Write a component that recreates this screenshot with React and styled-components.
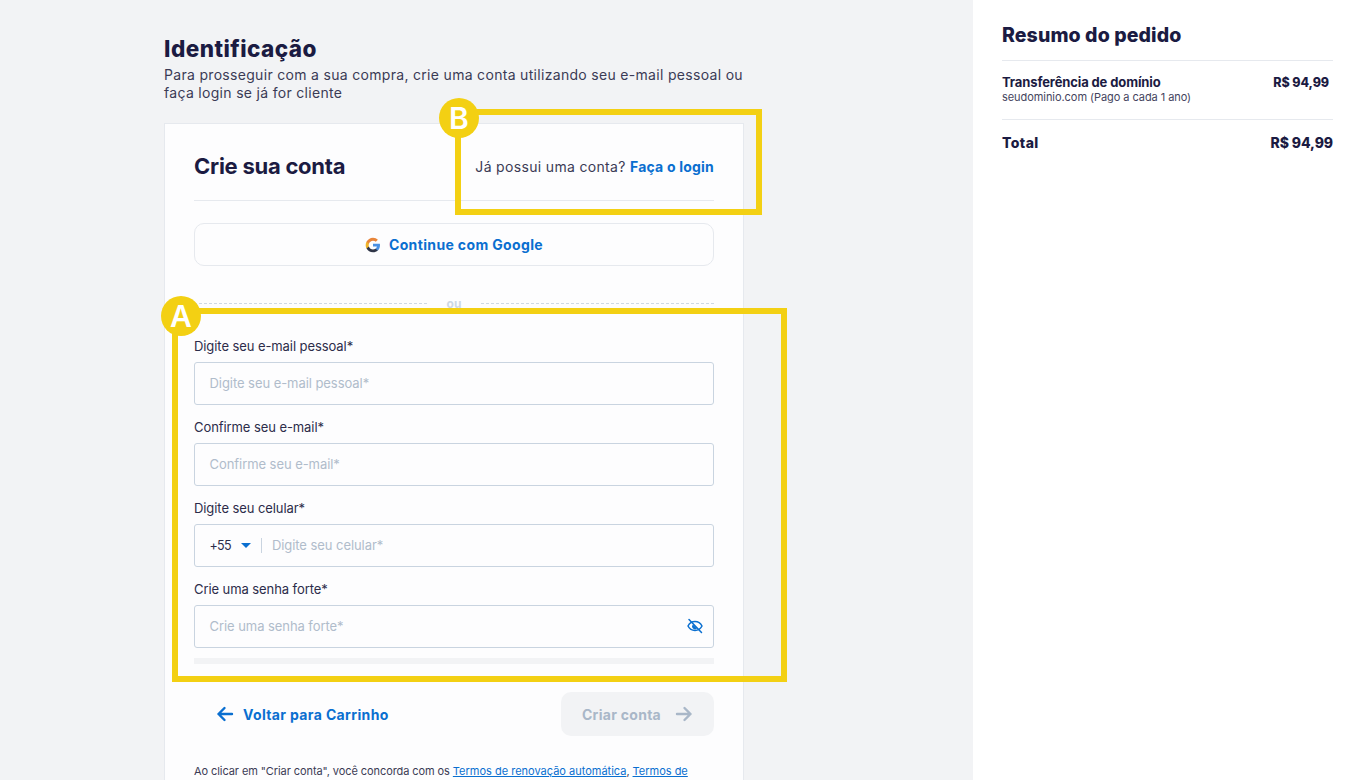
import React from "react";
import styled, { createGlobalStyle } from "styled-components";

const Global = createGlobalStyle`
  html, body { margin: 0; padding: 0; height: 780px; overflow: hidden; background: #f2f3f5; }
  * { box-sizing: border-box; }
  body { font-family: "Inter", "Liberation Sans", sans-serif; color: #1b1b42; }
`;

const Page = styled.div`
  position: relative;
  display: flex;
  width: 1353px;
  height: 780px;
  overflow: hidden;
`;
const Main = styled.main`
  width: 973px;
  flex: none;
  padding: 35px 0 0 164px;
  background: #f2f3f5;
`;
const Title = styled.h1`
  margin: 0 0 4px;
  font-size: 22.5px;
  line-height: 27px;
  font-weight: 800;
  letter-spacing: 0.45px;
  color: #1b1b42;
`;
const Intro = styled.p`
  margin: 0 0 21px;
  width: 600px;
  font-size: 14px;
  line-height: 18px;
  color: #3b3b55;
  letter-spacing: 0.31px;
`;
const Card = styled.section`
  width: 580px;
  height: 700px;
  padding: 0 29px;
  background: #fdfdfe;
  border: 1px solid #e6e9ee;
`;
const CardHead = styled.header`
  display: flex;
  align-items: center;
  justify-content: space-between;
  height: 77px;
  padding-top: 8px;
  border-bottom: 1px solid #e6e9ee;
`;
const CardTitle = styled.h2`
  margin: 0;
  font-size: 22px;
  font-weight: 700;
  letter-spacing: -0.25px;
  color: #1b1b42;
`;
const HeadNote = styled.div`
  font-size: 14px;
  color: #3b3b55;
  letter-spacing: 0.33px;
  a { font-weight: 700; color: #0a6fd0; text-decoration: none; letter-spacing: 0.2px; }
`;
const GoogleButton = styled.button`
  display: flex;
  align-items: center;
  justify-content: center;
  gap: 8px;
  width: 100%;
  height: 43px;
  margin-top: 22px;
  background: #fdfdfe;
  border: 1px solid #e6e9ee;
  border-radius: 10px;
  font: 700 14px "Inter", sans-serif;
  letter-spacing: 0.36px;
  color: #0a6fd0;
`;
const Or = styled.div`
  display: flex;
  align-items: center;
  gap: 20px;
  height: 14px;
  margin: 30px 0 0;
  font-size: 12px;
  font-weight: 700;
  color: #cdd8e4;
  &::before, &::after { content: ""; flex: 1; border-top: 1px dashed #cdd8e4; }
`;
const Fields = styled.div`
  display: flex;
  flex-direction: column;
  gap: 14px;
  margin-top: 28px;
`;
const Field = styled.div`
  display: flex;
  flex-direction: column;
  gap: 7px;
`;
const Label = styled.label`
  font-size: 13px;
  line-height: 17px;
  height: 17px;
  letter-spacing: -0.08px;
  color: #2c2c4a;
`;
const InputBox = styled.div`
  display: flex;
  align-items: center;
  height: 43px;
  padding: 0 10px 1px 14.5px;
  background: #fdfdfe;
  border: 1px solid #c9d4e0;
  border-radius: 3px;
  font-size: 13px;
  letter-spacing: -0.06px;
  color: #b0bccb;
`;
const Placeholder = styled.span`
  flex: 1;
`;
const Prefix = styled.span`
  display: flex;
  align-items: center;
  gap: 10px;
  height: 15px;
  padding-right: 10px;
  margin-right: 10px;
  border-right: 1px solid #c9d4e0;
  font-size: 12.5px;
  letter-spacing: -0.7px;
  color: #2c2c4a;
`;
const Caret = styled.i`
  width: 0;
  height: 0;
  border-left: 5px solid transparent;
  border-right: 5px solid transparent;
  border-top: 5px solid #0a6fd0;
`;
const Strength = styled.div`
  height: 6px;
  margin-top: -4px;
  background: #f2f3f5;
`;
const Actions = styled.div`
  display: flex;
  align-items: center;
  justify-content: space-between;
  margin-top: 28px;
  padding-left: 22px;
`;
const BackLink = styled.a`
  display: flex;
  align-items: center;
  gap: 9px;
  font-size: 14px;
  font-weight: 700;
  letter-spacing: 0.36px;
  color: #0a6fd0;
`;
const SubmitButton = styled.button`
  display: flex;
  align-items: center;
  justify-content: center;
  gap: 14px;
  width: 153px;
  height: 44px;
  border: 0;
  border-radius: 10px;
  background: #f2f3f5;
  font: 700 14px "Inter", sans-serif;
  letter-spacing: 0.28px;
  color: #a9b7c8;
`;
const Legal = styled.p`
  margin: 27px 0 0;
  font-size: 11px;
  line-height: 16px;
  letter-spacing: -0.08px;
  color: #3b3b55;
  a { color: #0a6fd0; text-decoration: underline; letter-spacing: 0; }
`;
const Aside = styled.aside`
  flex: 1;
  padding: 23px 20px 0 29px;
  background: #fff;
`;
const AsideTitle = styled.h2`
  margin: 0;
  height: 38px;
  font-size: 19.5px;
  line-height: 24px;
  font-weight: 800;
  letter-spacing: 0.1px;
  color: #1b1b42;
  border-bottom: 1px solid #e6e9ee;
`;
const OrderRow = styled.div`
  display: flex;
  justify-content: space-between;
  padding: 14px 4px 14px 0;
  height: 59px;
  border-bottom: 1px solid #e6e9ee;
`;
const OrderName = styled.div`
  font-size: 13px;
  line-height: 15px;
  font-weight: 700;
  letter-spacing: -0.12px;
  color: #1b1b42;
`;
const OrderNote = styled.div`
  font-size: 11px;
  line-height: 15px;
  font-weight: 400;
  letter-spacing: -0.06px;
  color: #44445e;
`;
const Amount = styled.div`
  font-size: 12.5px;
  line-height: 15px;
  font-weight: 800;
  letter-spacing: -0.1px;
  color: #1b1b42;
`;
const TotalRow = styled.div`
  display: flex;
  justify-content: space-between;
  padding-top: 14px;
  font-size: 14px;
  line-height: 17px;
  font-weight: 800;
  letter-spacing: -0.1px;
  color: #1b1b42;
  span:first-child { letter-spacing: 0.4px; }
`;
const Frame = styled.div`
  position: absolute;
  left: ${p => p.$x}px;
  top: ${p => p.$y}px;
  width: ${p => p.$w}px;
  height: ${p => p.$h}px;
  border: 6px solid #f3d013;
  pointer-events: none;
`;
const Badge = styled.div`
  position: absolute;
  left: ${p => p.$left}px;
  top: ${p => p.$top}px;
  width: 40px;
  height: 40px;
  border-radius: 50%;
  display: flex;
  align-items: center;
  justify-content: center;
  background: #f3d013;
  color: #fff;
  font-size: 30px;
  font-weight: 600;
  font-family: "Inter", sans-serif;
`;

const Google = () => (
  <svg width="16" height="16" viewBox="0 0 48 48">
    <path fill="#4a90e2" d="M45 24.5c0-1.600-.1-3.100-.4-4.500H24v8.500h11.800c-.5 2.700-2 5-4.400 6.600v5.500h7.100c4.200-3.800 6.500-9.500 6.500-16.100z" />
    <path fill="#2f3547" d="M24 46c5.900 0 10.900-2 14.500-5.400l-7.100-5.500c-2 1.300-4.500 2.100-7.400 2.100-5.700 0-10.500-3.800-12.200-9H4.500v5.700C8.100 41.100 15.500 46 24 46z" />
    <path fill="#f0b429" d="M11.800 28.700c-.4-1.300-.7-2.800-.7-4.200s.3-2.900.7-4.200v-5.700H4.500C3 17.600 2 21 2 24.500s1 6.900 2.500 9.900l7.300-5.700z" />
    <path fill="#e8853a" d="M24 11c3.200 0 6.100 1.100 8.400 3.300l6.300-6.300C34.900 4.400 29.900 2 24 2 15.500 2 8.100 6.900 4.500 14.600l7.300 5.700C13.500 15 18.300 11 24 11z" />
  </svg>
);

const ArrowLeft = () => (
  <svg width="18" height="18" viewBox="0 0 18 18" fill="none" stroke="#0a6fd0" strokeWidth="2.400" strokeLinecap="round" strokeLinejoin="round">
    <path d="M16 9H2.500M8.500 3 2.500 9l6 6" />
  </svg>
);
const ArrowRight = () => (
  <svg width="18" height="18" viewBox="0 0 18 18" fill="none" stroke="#a9b7c8" strokeWidth="2.400" strokeLinecap="round" strokeLinejoin="round">
    <path d="M2 9h13.500M9.500 3l6 6-6 6" />
  </svg>
);
const EyeOff = () => (
  <svg width="16" height="16" viewBox="0 0 16 16" fill="none" stroke="#0a6fd0" strokeWidth="1.500" strokeLinecap="round">
    <path d="M1 8c1.500-3 4-4.500 7-4.500S13.500 5 15 8c-1.500 3-4 4.500-7 4.500S2.500 11 1 8z" />
    <path d="M2 1.500 14.500 14.500" />
    <path fill="#0a6fd0" stroke="none" d="M6 6.500 10 10.500a2.500 2.500 0 0 1-4-4z" />
  </svg>
);

export default function App() {
  return (
    <Page>
      <Global />
      <Main>
        <Title>Identificação</Title>
        <Intro>Para prosseguir com a sua compra, crie uma conta utilizando seu e-mail pessoal ou faça login se já for cliente</Intro>
        <Card>
          <CardHead>
            <CardTitle>Crie sua conta</CardTitle>
            <HeadNote>Já possui uma conta? <a href="#login">Faça o login</a></HeadNote>
          </CardHead>
          <GoogleButton><Google />Continue com Google</GoogleButton>
          <Or>ou</Or>
          <Fields>
            <Field>
              <Label>Digite seu e-mail pessoal*</Label>
              <InputBox><Placeholder>Digite seu e-mail pessoal*</Placeholder></InputBox>
            </Field>
            <Field>
              <Label>Confirme seu e-mail*</Label>
              <InputBox><Placeholder>Confirme seu e-mail*</Placeholder></InputBox>
            </Field>
            <Field>
              <Label>Digite seu celular*</Label>
              <InputBox>
                <Prefix>+55 <Caret /></Prefix>
                <Placeholder>Digite seu celular*</Placeholder>
              </InputBox>
            </Field>
            <Field>
              <Label>Crie uma senha forte*</Label>
              <InputBox><Placeholder>Crie uma senha forte*</Placeholder><EyeOff /></InputBox>
            </Field>
            <Strength />
          </Fields>
          <Actions>
            <BackLink><ArrowLeft />Voltar para Carrinho</BackLink>
            <SubmitButton>Criar conta <ArrowRight /></SubmitButton>
          </Actions>
          <Legal>Ao clicar em "Criar conta", você concorda com os <a href="#a">Termos de renovação automática</a>, <a href="#b">Termos de</a></Legal>
        </Card>
      </Main>
      <Aside>
        <AsideTitle>Resumo do pedido</AsideTitle>
        <OrderRow>
          <div>
            <OrderName>Transferência de domínio</OrderName>
            <OrderNote>seudominio.com (Pago a cada 1 ano)</OrderNote>
          </div>
          <Amount>R$ 94,99</Amount>
        </OrderRow>
        <TotalRow><span>Total</span><span>R$ 94,99</span></TotalRow>
      </Aside>
      <Frame $x={172} $y={308} $w={615} $h={374}><Badge $left={-17} $top={-18}>A</Badge></Frame>
      <Frame $x={455} $y={109} $w={307} $h={106}><Badge $left={-22} $top={-17}>B</Badge></Frame>
    </Page>
  );
}
